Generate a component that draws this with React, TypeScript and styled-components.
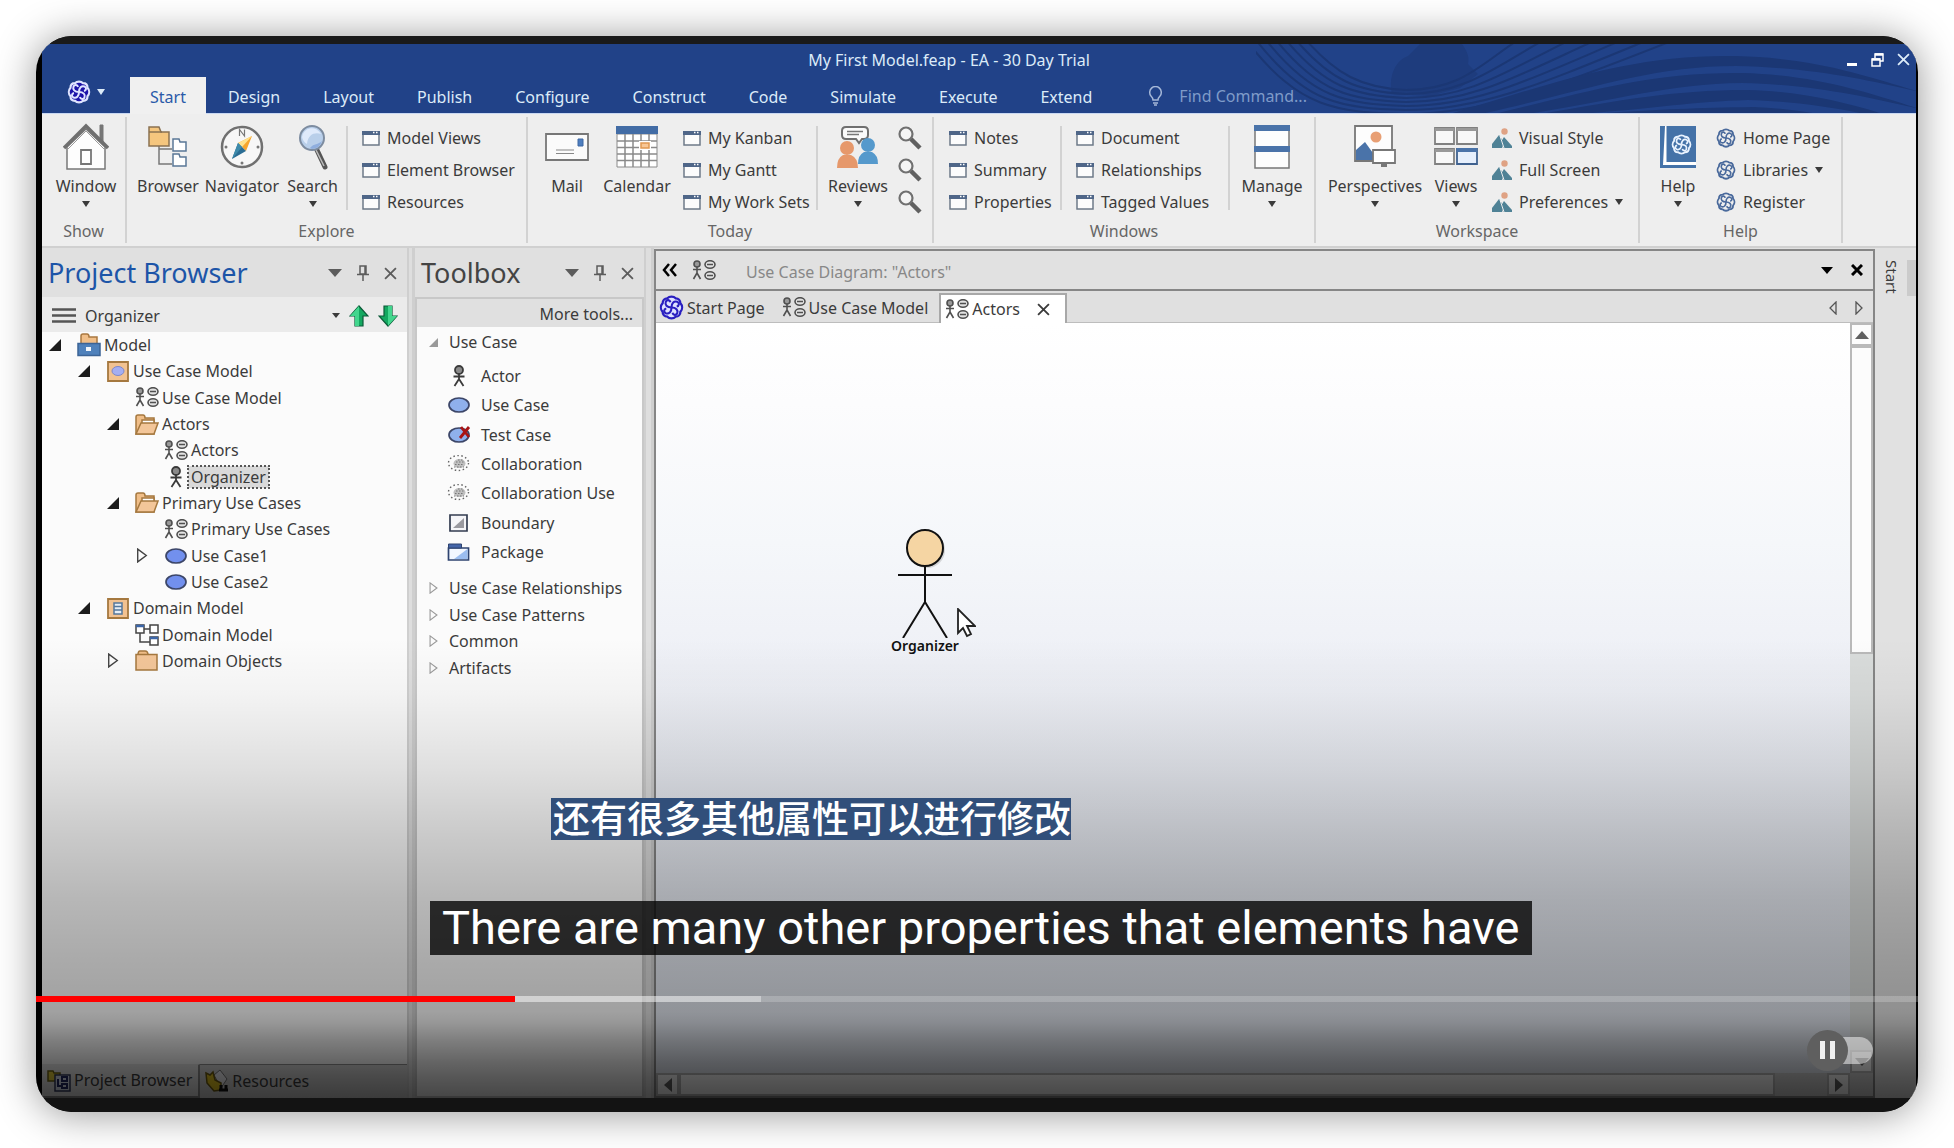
import React from "react";
import styled, { createGlobalStyle, css } from "styled-components";

const uiFont = '"Noto Sans", "Open Sans", "DejaVu Sans", sans-serif';

const GlobalStyle = createGlobalStyle`
  *, *::before, *::after { box-sizing: border-box; }
  body { margin: 0; background: #fff; font-family: ${uiFont}; font-size: 16px; color: #3b3b3b; }
  button, input, select { font: inherit; color: inherit; background: none; border: 0; padding: 0; margin: 0; }
  ul { list-style: none; margin: 0; padding: 0; }
  svg { display: block; flex: none; }
`;

/* ---------- frame ---------- */

const Page = styled.div`
  height: 100vh;
  padding: 36px;
  display: flex;
  overflow: hidden;
`;
const Frame = styled.main`
  position: relative;
  flex: 1;
  min-width: 0;
  display: flex;
  flex-direction: column;
  background: #000;
  border-radius: 36px;
  overflow: hidden;
`;
const Shadow = styled.div`
  flex: 1;
  display: flex;
  min-width: 0;
  border-radius: 36px;
  box-shadow: 0 2px 40px rgba(0, 0, 0, 0.42);
`;
const TopEdge = styled.div`height: 8px; flex: none; background: #1a1a1a;`;
const BottomEdge = styled.div`height: 14px; flex: none; background: #131313;`;
const Screen = styled.div`
  flex: 1;
  min-height: 0;
  margin: 0 2px 0 6px;
  display: flex;
  flex-direction: column;
  background: #e0e0e0;
`;

/* ---------- title bar ---------- */

const TitleBar = styled.header`
  position: relative;
  flex: none;
  background: #214288;
  color: #dcebf8;
  border-bottom: 1px solid #c9d8f2;
`;
const Waves = styled.svg`
  position: absolute;
  right: 0;
  top: 0;
  width: 660px;
  height: 69px;
`;
const TitleRow = styled.div`
  position: relative;
  display: grid;
  grid-template-columns: 1fr auto 1fr;
  align-items: center;
  height: 33px;
  padding: 0 6px 2px 0;
`;
const TitleText = styled.h1`
  grid-column: 2;
  margin: 0 54px 0 0;
  font-size: 16px;
  line-height: 22px;
  font-weight: 400;
`;
const WindowButtons = styled.div`
  justify-self: end;
  display: flex;
  gap: 13px;
`;
const PlainButton = styled.button`
  display: flex;
  align-items: center;
  justify-content: center;
`;
const TabRow = styled.nav`
  position: relative;
  display: flex;
  align-items: stretch;
  height: 37px;
  margin-bottom: -1px;
`;
const AppButton = styled(PlainButton)`
  width: 88px;
  padding-bottom: 8px;
  gap: 6px;
`;
const RibbonTab = styled.button<{ $active?: boolean }>`
  padding: 2px 21px 0;
  margin-right: 1px;
  line-height: 22px;
  ${(p) => p.$active && css`background: #f0f0f0; color: #2a5aa8; padding: 2px 20px 0;`}
`;
const FindBox = styled.label`
  display: flex;
  align-items: center;
  gap: 16px;
  margin-left: 34px;
`;
const FindInput = styled.input`
  width: 160px;
  outline: none;
  &::placeholder { color: #7f9bc9; opacity: 1; }
`;

/* ---------- ribbon ---------- */

const Ribbon = styled.div`
  flex: none;
  display: flex;
  height: 134px;
  padding: 3px 0;
  background: #eeeeee;
  border-bottom: 2px solid #d0d0d0;
`;
const Group = styled.section<{ $w: number }>`
  width: ${(p) => p.$w}px;
  display: flex;
  flex-direction: column;
  border-right: 2px solid #d2d2d2;
`;
const GroupBody = styled.div<{ $pad?: number }>`
  display: flex;
  height: 103px;
  padding: 0 0 0 ${(p) => p.$pad ?? 0}px;
`;
const GroupName = styled.h2`
  margin: 0;
  font-size: 16px;
  line-height: 22px;
  font-weight: 400;
  color: #666;
  text-align: center;
`;
const Big = styled.button<{ $w: number }>`
  width: ${(p) => p.$w}px;
  flex: none;
  display: flex;
  flex-direction: column;
  align-items: center;
  padding-top: 6px;
  line-height: 22px;
  white-space: nowrap;
`;
const BigIcon = styled.span`
  display: flex;
  align-items: center;
  height: 48px;
  margin-bottom: 4px;
`;
const BigMenu = styled.span`padding-top: 4px;`;
const SmallColumn = styled.div<{ $w?: number; $pad: number }>`
  ${(p) => (p.$w ? `width: ${p.$w}px;` : "flex: 1;")}
  padding: 5px 0 0 ${(p) => p.$pad}px;
`;
const Small = styled.button`
  display: flex;
  align-items: center;
  gap: 7px;
  height: 32px;
  line-height: 22px;
  white-space: nowrap;
`;
const InnerRule = styled.div`
  width: 2px;
  height: 84px;
  margin-top: 9px;
  background: #d2d2d2;
`;

/* ---------- workspace ---------- */

const Workspace = styled.div`
  flex: 1;
  min-height: 0;
  display: flex;
`;
const Splitter = styled.div<{ $w: number }>`
  width: ${(p) => p.$w}px;
  flex: none;
  background: #dedede;
  border: solid #cfcfcf;
  border-width: 0 3px 0 2px;
`;
const Panel = styled.section<{ $w: number }>`
  width: ${(p) => p.$w}px;
  flex: none;
  display: flex;
  flex-direction: column;
`;
const PanelHead = styled.div`
  display: flex;
  align-items: center;
  gap: 15px;
  height: 49px;
  padding: 1px 10px 0 6px;
  color: #5c5c5c;
`;
const PanelTitle = styled.h2<{ $blue?: boolean }>`
  flex: 1;
  margin: 0;
  font-size: 27px;
  line-height: 36px;
  font-weight: 400;
  white-space: nowrap;
  color: ${(p) => (p.$blue ? "#1d55a8" : "#444")};
`;
const ContextBar = styled.div`
  display: flex;
  align-items: center;
  height: 35px;
  padding: 2px 9px 0 10px;
  gap: 9px;
  background: #ebebeb;
`;
const ContextSelect = styled.select`
  flex: 1;
  appearance: none;
  line-height: 22px;
`;
const TreeArea = styled.div`
  flex: 1;
  background: #fbfbfb;
`;
const Tree = styled.ul`
  display: grid;
  grid-template-rows: repeat(13, 1fr);
  height: 342px;
`;
const TreeRow = styled.li<{ $level: number }>`
  display: flex;
  align-items: center;
  padding-left: ${(p) => 7 + p.$level * 29}px;
  line-height: 22px;
`;
const Toggle = styled(PlainButton)`
  width: 28px;
  justify-content: flex-start;
`;
const Glyph = styled.span<{ $w: number }>`
  width: ${(p) => p.$w}px;
  flex: none;
  display: flex;
  justify-content: center;
`;
const TreeLabel = styled.button<{ $selected?: boolean }>`
  padding: 0 3px;
  ${(p) => p.$selected && css`background: #d9d9d9; outline: 2px dotted #555; outline-offset: -1px;`}
`;
const DockTabs = styled.div`
  flex: none;
  display: flex;
  height: 34px;
  background: #d4d4d4;
`;
const DockTab = styled.button<{ $active?: boolean }>`
  display: flex;
  align-items: center;
  gap: 3px;
  padding: 0 6px 2px 5px;
  border-top: 1px solid ${(p) => (p.$active ? "transparent" : "#8f8f8f")};
  ${(p) => p.$active && css`background: #e6e6e6; border-right: 2px solid #8f8f8f; border-bottom: 2px solid #8f8f8f;`}
`;
const DockRest = styled.div`flex: 1; border-top: 1px solid #8f8f8f;`;

const ToolList = styled.div`
  flex: 1;
  background: #fbfbfb;
  border: 2px solid #c8c8c8;
  overflow: hidden;
`;
const MoreTools = styled.button`
  display: block;
  width: 100%;
  height: 28px;
  padding: 2px 9px 0;
  text-align: right;
  background: #e0e0e0;
`;
const Category = styled.button`
  display: flex;
  align-items: center;
  gap: 11px;
  height: 100%;
  padding-left: 12px;
  white-space: nowrap;
`;
const FirstCategory = styled.div`height: 30px;`;
const Tools = styled.ul`
  display: grid;
  grid-template-rows: repeat(7, 1fr);
  height: 206px;
  margin: 4px 0 8px;
`;
const Categories = styled.ul`
  display: grid;
  grid-template-rows: repeat(4, 1fr);
  height: 106px;
`;
const Tool = styled.button`
  display: flex;
  align-items: center;
  gap: 10px;
  height: 100%;
  padding-left: 30px;
`;

/* ---------- document ---------- */

const Document = styled.section`
  flex: 1;
  min-width: 0;
  margin-top: 1px;
  display: flex;
  flex-direction: column;
  border: 2px solid #868686;
`;
const DocHead = styled.div`
  flex: none;
  display: flex;
  align-items: center;
  height: 40px;
  padding: 0 10px 0 6px;
  border-bottom: 2px solid #868686;
  background: #e1e1e1;
  color: #000;
`;
const DocTitle = styled.h2`
  flex: 1;
  margin: 0;
  padding: 4px 0 0 16px;
  font-size: 16px;
  font-weight: 400;
  line-height: 22px;
  color: #888;
`;
const DocTabs = styled.div`
  flex: none;
  display: flex;
  align-items: stretch;
  height: 32px;
  padding: 2px 10px 0 3px;
  background: linear-gradient(#e0e0e0 31px, #bdbdbd 31px);
`;
const DocTab = styled.button<{ $active?: boolean }>`
  display: flex;
  align-items: center;
  gap: 3px;
  margin-right: 17px;
  padding-bottom: 1px;
  ${(p) => p.$active && css`background: #fff; border: solid #a8a8a8; border-width: 2px 2px 0; padding: 0 0 0 4px; margin: 0 0 0 -6px;`}
`;
const DocRest = styled.div`
  flex: 1;
  display: flex;
  justify-content: flex-end;
  gap: 18px;
`;
const CanvasGrid = styled.div`
  flex: 1;
  min-height: 0;
  display: grid;
  grid-template-columns: 1fr 23px;
  grid-template-rows: 1fr 23px;
`;
const Canvas = styled.div`
  position: relative;
  background: linear-gradient(#ffffff 0, #fcfcfd 80px, #f5f7fa 220px, #eef0f6 340px, #e5e9f1 620px, #e0e5ee 100%);
`;
const ActorNode = styled.figure`
  position: absolute;
  left: 231px;
  top: 205px;
  width: 76px;
  margin: 0;
  display: flex;
  flex-direction: column;
  align-items: center;
  color: #111;
  font-size: 14px;
  font-weight: 600;
  line-height: 16px;
`;
const Cursor = styled.svg`
  position: absolute;
  left: 300px;
  top: 285px;
`;
const VScroll = styled.div`
  display: flex;
  flex-direction: column;
  background: #d9dcdb;
`;
const HScroll = styled.div`
  display: flex;
  background: #d0d0d0;
`;
const ScrollButton = styled(PlainButton)`
  width: 23px;
  height: 23px;
  flex: none;
  background: #fcfcfc;
  border: 2px solid #b9b9b9;
  color: #606060;
`;
const Thumb = styled.div<{ $grow: number }>`
  flex: ${(p) => p.$grow};
  background: #fcfcfc;
  border: 2px solid #b9b9b9;
`;
const Spacer = styled.div<{ $grow: number }>`flex: ${(p) => p.$grow};`;
const Corner = styled.div`background: #d0d0d0;`;
const SideStrip = styled.aside`
  width: 41px;
  flex: none;
  display: flex;
  justify-content: space-between;
  align-items: flex-start;
  padding-top: 12px;
  background: #e1e1e1;
`;
const SideTab = styled.button`
  writing-mode: vertical-rl;
  padding-left: 6px;
  font-size: 15px;
  line-height: 22px;
`;
const SideHandle = styled.div`width: 9px; height: 36px; background: #cbcbcb;`;

/* ---------- player overlay ---------- */

const Shade = styled.div`
  position: absolute;
  left: 0;
  right: 0;
  bottom: 14px;
  height: 460px;
  pointer-events: none;
  background: linear-gradient(
    rgba(0, 0, 0, 0) 0,
    rgba(0, 0, 0, 0.03) 55px,
    rgba(0, 0, 0, 0.11) 130px,
    rgba(0, 0, 0, 0.2) 200px,
    rgba(0, 0, 0, 0.27) 260px,
    rgba(0, 0, 0, 0.32) 320px,
    rgba(0, 0, 0, 0.36) 374px,
    rgba(0, 0, 0, 0.4) 385px,
    rgba(0, 0, 0, 0.5) 403px,
    rgba(0, 0, 0, 0.6) 424px,
    rgba(0, 0, 0, 0.66) 440px,
    rgba(0, 0, 0, 0.72) 460px
  );
`;
const TranslatedCaption = styled.p`
  position: absolute;
  left: 515px;
  bottom: 272px;
  margin: 0;
  padding-left: 2px;
  font-family: "Noto Sans CJK SC", sans-serif;
  font-size: 37px;
  font-weight: 500;
  line-height: 38px;
  height: 42px;
  color: #fff;
  background: #314f7a;
`;
const Caption = styled.p`
  position: absolute;
  left: 394px;
  bottom: 157px;
  margin: 0;
  padding: 0 12px;
  font-family: Roboto, sans-serif;
  font-size: 47px;
  line-height: 54px;
  color: #fff;
  background: rgba(8, 8, 8, 0.82);
  white-space: nowrap;
`;
const Seek = styled.input<{ $played: number; $loaded: number }>`
  position: absolute;
  left: 0;
  bottom: 110px;
  width: 100%;
  height: 6px;
  appearance: none;
  background: linear-gradient(
    to right,
    #f00 ${(p) => p.$played}%,
    rgba(255, 255, 255, 0.5) ${(p) => p.$played}%,
    rgba(255, 255, 255, 0.5) ${(p) => p.$loaded}%,
    rgba(255, 255, 255, 0.2) ${(p) => p.$loaded}%
  );
  &::-webkit-slider-thumb { appearance: none; width: 0; height: 0; }
`;
const AutoPlay = styled.button`
  position: absolute;
  right: 45px;
  bottom: 41px;
  width: 66px;
  height: 42px;
  display: flex;
  align-items: center;
`;
const AutoTrack = styled.span`
  position: absolute;
  left: 8px;
  right: 0;
  top: 8px;
  height: 27px;
  border-radius: 14px;
  background: rgba(255, 255, 255, 0.5);
`;
const AutoKnob = styled.span`
  position: relative;
  width: 41px;
  height: 41px;
  border-radius: 50%;
  background: #5f5f5f;
  display: flex;
  align-items: center;
  justify-content: center;
  gap: 5px;
  &::before, &::after { content: ""; width: 5px; height: 18px; background: #f0f0f0; }
`;

/* ---------- icons ---------- */

const Caret = ({ w = 8, h = 6 }: { w?: number; h?: number }) => (
  <svg width={w} height={h} viewBox="0 0 10 6" preserveAspectRatio="none"><path d="M0 0h10L5 6z" fill="currentColor" /></svg>
);
const Cross = ({ size = 13, weight = 1.7 }: { size?: number; weight?: number }) => (
  <svg width={size} height={size} viewBox="0 0 12 12"><path d="M1 1l10 10M11 1L1 11" stroke="currentColor" strokeWidth={weight} fill="none" /></svg>
);
const Pin = () => (
  <svg width="12" height="16" viewBox="0 0 12 16"><path d="M3 1h6v8H3zM0 9.500h12M6 9v7M8 1v8" stroke="currentColor" strokeWidth="1.500" fill="none" /></svg>
);
const Knot = ({ size, line, fill = "none" }: { size: number; line: string; fill?: string }) => (
  <svg width={size} height={size} viewBox="0 0 24 24">
    <path d="M8 3.200c2-2.200 6-2.200 8 0 2.800 0 4.500 2 4.500 4.600 2.200 2.400 2.200 6 0 8.400 0 2.600-1.700 4.600-4.500 4.600-2 2.200-6 2.200-8 0-2.800 0-4.500-2-4.500-4.600-2.200-2.400-2.200-6 0-8.400 0-2.600 1.700-4.600 4.500-4.600z" fill={fill} stroke={line} strokeWidth="2.200" />
    {[0, 90, 180, 270].map((a) => (
      <path key={a} transform={`rotate(${a} 12 12)`} d="M12 12c0-4.500 2.500-6.500 5.500-5.500 2.300 1 2 4-.5 4.500" fill="none" stroke={line} strokeWidth="2" />
    ))}
  </svg>
);
const HouseIcon = () => (
  <svg width="46" height="48" viewBox="0 0 46 48">
    <path d="M4 24v22h38V24L23 6z" fill="#fdfdfd" stroke="#777" strokeWidth="1.500" />
    <path d="M37 2h3v20l-3-3z" fill="#777" stroke="#777" />
    <path d="M1 25L23 3l22 22" fill="none" stroke="#6f6f6f" strokeWidth="3.500" />
    <path d="M3 28L23 8l20 20" fill="none" stroke="#999" strokeWidth="1" />
    <path d="M18 27h10v14H18z" fill="#fff" stroke="#777" strokeWidth="1.800" />
  </svg>
);
const FoldersIcon = () => (
  <svg width="40" height="42" viewBox="0 0 40 42">
    <path d="M11 19v19h13M11 23h13" fill="none" stroke="#777" strokeWidth="1.500" />
    <path d="M1 6V1h10l2 5h8v14H1z" fill="#f5c67e" stroke="#8a7252" strokeWidth="1.500" />
    <path d="M1 6h13" stroke="#8a7252" strokeWidth="1.500" />
    <path d="M25 16v-3h6l1 3h6v9H25zM25 31v-3h6l1 3h6v9H25z" fill="#fff" stroke="#5a7797" strokeWidth="1.500" />
  </svg>
);
const CompassIcon = () => (
  <svg width="44" height="44" viewBox="0 0 44 44">
    <circle cx="22" cy="22" r="20" fill="#f7f7f7" stroke="#707070" strokeWidth="2.500" />
    <path d="M19.500 11V4.500l5 6.500V4.500" fill="none" stroke="#777" strokeWidth="1.200" />
    <circle cx="22" cy="38" r="1.500" fill="#777" /><circle cx="6" cy="22" r="1.500" fill="#777" /><circle cx="38" cy="22" r="1.500" fill="#777" />
    <path d="M32 11l-6 15-8-8z" fill="#f6a52c" /><path d="M32 11L22 22l-4-4z" fill="#ffe28c" />
    <path d="M12 34l6-16 8 8z" fill="#2b6d93" /><path d="M12 34l10-12-4-4z" fill="#3e8bab" />
  </svg>
);
const SearchIcon = () => (
  <svg width="30" height="46" viewBox="0 0 30 46">
    <path d="M18 24l9 19" stroke="#555" strokeWidth="5" strokeLinecap="round" /><path d="M18 26l8 16" stroke="#bbb" strokeWidth="1.500" />
    <circle cx="14" cy="14" r="12" fill="#b9cfea" stroke="#7d8ca0" strokeWidth="2" />
    <path d="M4 13a10 10 0 0 1 19-3c-6-2-13 0-14 10a10 10 0 0 1-5-7z" fill="#dfeafb" />
    <path d="M14 25a11 11 0 0 0 10-8c-4 4-8 2-12 7z" fill="#8faede" />
  </svg>
);
const WindowIcon = () => (
  <svg width="18" height="15" viewBox="0 0 18 15">
    <path d="M1 1h16v13H1z" fill="#fcfcfc" stroke="#6e7a88" strokeWidth="1.500" /><path d="M0 0h18v4H0z" fill="#4f6688" /><path d="M11 1.500h1.500M14 1.500h1.500" stroke="#fff" strokeWidth="1.500" />
  </svg>
);
const MailIcon = () => (
  <svg width="44" height="28" viewBox="0 0 44 28">
    <path d="M1 1h42v26H1z" fill="#fbfbfb" stroke="#777" strokeWidth="1.800" /><path d="M33 6h5v7h-5z" fill="#4f7fc0" stroke="#3f69a3" /><path d="M11 17h18M11 20.500h18" stroke="#888" strokeWidth="1.200" />
  </svg>
);
const CalendarIcon = () => (
  <svg width="42" height="42" viewBox="0 0 42 42">
    <path d="M1 8h40v33H1z" fill="#fff" stroke="#8a8a8a" /><path d="M9 8v33M17 8v33M25 8v33M33 8v33M1 15h40M1 21.500h40M1 28h40M1 34.500h40" stroke="#8a8a8a" strokeWidth="1.500" />
    <path d="M0 0h42v8H0z" fill="#426ca5" /><path d="M23 15h12v9H23z" fill="#fff" /><path d="M25 17h8v5h-8z" fill="#f8c795" stroke="#e09850" strokeWidth="1.500" />
  </svg>
);
const ReviewsIcon = () => (
  <svg width="42" height="44" viewBox="0 0 42 44">
    <path d="M9 2h18q4 0 4 4v4q0 4-4 4h-2l-3 4-3-4H9q-4 0-4-4V6q0-4 4-4z" fill="#fafafa" stroke="#6f6f6f" strokeWidth="2" /><path d="M10 6.500h16M10 9.500h12" stroke="#777" strokeWidth="1.300" />
    <circle cx="31" cy="20" r="7" fill="#5599cc" /><path d="M21 39q0-9 6-12h8q6 3 6 12z" fill="#5599cc" />
    <circle cx="10" cy="23" r="7" fill="#e6986b" /><path d="M0 43q0-10 6-13h8q7 3 7 13z" fill="#e6986b" />
  </svg>
);
const LensIcon = () => (
  <svg width="24" height="24" viewBox="0 0 24 24"><circle cx="8" cy="8" r="6.500" fill="#f4f4f4" stroke="#707070" strokeWidth="2.200" /><path d="M13 13l9 9" stroke="#606060" strokeWidth="4.500" /></svg>
);
const ManageIcon = () => (
  <svg width="36" height="44" viewBox="0 0 36 44"><path d="M1 1h34v42H1z" fill="#fdfdfd" stroke="#777" strokeWidth="1.500" /><path d="M0 0h36v6H0zM0 21h36v6H0z" fill="#4a73a9" /></svg>
);
const PerspectivesIcon = () => (
  <svg width="42" height="44" viewBox="0 0 42 44">
    <path d="M1 1h37v35H1z" fill="#fdfdfd" stroke="#777" strokeWidth="1.800" /><circle cx="22" cy="12" r="5.500" fill="#e89f74" />
    <path d="M2 35V25l9-8 13 18z" fill="#4a73a9" /><path d="M19 25h22v13H19z" fill="#fff" stroke="#777" strokeWidth="1.800" /><path d="M27 38h6v4h-6z" fill="#777" />
  </svg>
);
const ViewsIcon = () => (
  <svg width="44" height="40" viewBox="0 0 44 40">
    <path d="M1 1h19v16H1zM23 1h20v16H23zM1 22h19v15H1z" fill="#f8f8f8" stroke="#808080" strokeWidth="1.800" /><path d="M1 1h19v3H1zM23 1h20v3H23zM1 22h19v3H1z" fill="#999" />
    <path d="M23 22h20v15H23z" fill="#e6effc" stroke="#3f618f" strokeWidth="1.800" /><path d="M23 21h20v4H23z" fill="#4a73a9" />
  </svg>
);
const StyleIcon = () => (
  <svg width="20" height="20" viewBox="0 0 20 20"><circle cx="12.500" cy="3.500" r="3.200" fill="#dfa284" /><path d="M0 20v-4l7-9 4 6-1 7z" fill="#4f8296" /><path d="M11 20l-2-6 3-5 8 9v2z" fill="#4f8296" /><path d="M8 8l4 12" stroke="#eee" strokeWidth="1" /></svg>
);
const BookIcon = () => (
  <svg width="36" height="42" viewBox="0 0 36 42">
    <path d="M0 0h36v42H0z" fill="#4472a8" /><path d="M5 0h1.500v36H36v3H3z" fill="#fff" />
    <g transform="translate(11 8)"><Knot size={21} line="#e8f2ff" /></g>
  </svg>
);
const DiagramIcon = () => (
  <svg width="24" height="21" viewBox="0 0 24 21" fill="none" stroke="#505050" strokeWidth="1.600">
    <circle cx="5" cy="4" r="3" fill="#999" /><path d="M5 7v7M1 9.500h8M5 13l-3.500 6M5 13l3.500 6" />
    <ellipse cx="18" cy="4.500" rx="5" ry="3.800" fill="#e2e2e2" /><ellipse cx="18" cy="15.500" rx="5" ry="3.800" fill="#e2e2e2" /><path d="M15 4.500h6M15 15.500h6" />
  </svg>
);
const ActorIcon = ({ tall = 22 }: { tall?: number }) => (
  <svg width="14" height={tall} viewBox="0 0 14 22" fill="none" stroke="#3a3a3a" strokeWidth="1.800">
    <circle cx="7" cy="5" r="4" fill="#8a8a8a" /><path d="M7 9v6M1.500 11.500h11M7 14l-4.500 7M7 14l4.500 7" />
  </svg>
);
const OvalIcon = ({ fill = "#7290ee", crossed }: { fill?: string; crossed?: boolean }) => (
  <svg width="24" height="18" viewBox="0 0 24 18">
    <ellipse cx="12" cy="9" rx="10" ry="7" fill={fill} stroke="#3c4668" strokeWidth="1.700" />
    {crossed && <path d="M13 12l9-11M14 1l8 10" stroke="#a81414" strokeWidth="2.800" fill="none" />}
  </svg>
);
const CloudIcon = () => (
  <svg width="24" height="18" viewBox="0 0 24 18"><ellipse cx="11.500" cy="8" rx="10" ry="7.500" fill="none" stroke="#666" strokeWidth="1.400" strokeDasharray="1.500 2.500" /><ellipse cx="12.500" cy="8.500" rx="6" ry="4.500" fill="#c0c0c0" /><path d="M7 12h10M8 9.500h9M9 7h8M11 5h6" stroke="#777" strokeDasharray="1.500 1.500" /></svg>
);
const BoundaryIcon = () => (
  <svg width="24" height="18" viewBox="0 0 24 18"><path d="M3 1h17v16H3z" fill="#f5f5f8" stroke="#333c50" strokeWidth="1.700" /><path d="M17 4v10H6z" fill="#9a9aa0" /></svg>
);
const PackageIcon = () => (
  <svg width="24" height="18" viewBox="0 0 24 18"><path d="M1.500 5h20v12h-20z" fill="#f2f7ff" stroke="#2f4470" strokeWidth="1.700" /><path d="M7 16L20.500 6v10z" fill="#9bbdf0" /><path d="M1.500 1h13v4h-13z" fill="#4465a8" stroke="#2f4470" /></svg>
);
const RootIcon = () => (
  <svg width="24" height="24" viewBox="0 0 24 24"><path d="M4 12V3q0-2 2-2h4q2 0 2 3h8v9H4z" fill="#f0be88" stroke="#a97840" strokeWidth="1.500" /><path d="M1 10.500h22v12H1z" fill="#4f81bb" stroke="#3c6496" strokeWidth="1.500" /><path d="M9 14h5v4H9z" fill="#f2f6fb" /></svg>
);
const ModelIcon = ({ domain }: { domain?: boolean }) => (
  <svg width="22" height="21" viewBox="0 0 22 21"><path d="M1 1h20v19H1z" fill="#f2c291" stroke="#a5783f" strokeWidth="1.800" />
    {domain ? <path d="M7 5h8v11H7zM7 8.500h8M7 12h8" fill="#e6eef6" stroke="#55789c" strokeWidth="1.500" /> : <ellipse cx="11" cy="10" rx="6" ry="4.500" fill="#a5aef2" stroke="#7f88c8" />}
  </svg>
);
const FolderIcon = ({ open }: { open?: boolean }) => (
  <svg width="24" height="21" viewBox="0 0 24 21" stroke="#a5783f" strokeWidth="1.500">
    {open ? (<><path d="M1 20V3q0-2 2-2h5q2 0 2 3h9v16z" fill="#f0be88" /><path d="M7 6h12v6H7z" fill="#fff" /><path d="M1 20l5-11h17l-4 11z" fill="#f3c699" /></>)
      : (<><path d="M3 5q0-4 2-4h5q3 0 3 4" fill="#f0be88" /><path d="M1 4.500h21V20H1z" fill="#f3c699" /></>)}
  </svg>
);
const ClassIcon = () => (
  <svg width="24" height="22" viewBox="0 0 24 22" fill="#fff" stroke="#444" strokeWidth="1.500"><path d="M5 9v9h10M9 5h6" fill="none" /><path d="M1 1h8v8H1zM15 1h8v8h-8zM15 13h8v8h-8z" /><path d="M1 2h8M15 14h8" stroke="#3c66a8" strokeWidth="2.500" /></svg>
);
const Expander = ({ open, light }: { open?: boolean; light?: boolean }) =>
  open ? (
    <svg width={light ? 9 : 12} height={light ? 9 : 12} viewBox="0 0 12 12"><path d="M12 0v12H0z" fill={light ? "#999" : "#1c1c1c"} /></svg>
  ) : (
    <svg width={light ? 9 : 12} height={light ? 12 : 15} viewBox="0 0 10 14"><path d="M1 1l8 6-8 6z" fill="none" stroke={light ? "#999" : "#444"} strokeWidth="1.300" /></svg>
  );
const NavArrow = ({ up }: { up?: boolean }) => (
  <svg width="20" height="22" viewBox="0 0 20 22"><g transform={up ? undefined : "rotate(180 10 11)"}><path d="M10 1l9 10h-5v10H6V11H1z" fill="#14a860" stroke="#0b5a38" strokeWidth="1.200" /><path d="M10 1v20H6V11H1z" fill="#42d68d" /></g></svg>
);
const Triangle = ({ dir }: { dir: "up" | "down" | "left" | "right" }) => {
  const turn = { up: 0, right: 90, down: 180, left: 270 }[dir];
  return <svg width="16" height="16" viewBox="0 0 16 16"><path transform={`rotate(${turn} 8 8)`} d="M8 4l7 8H1z" fill="currentColor" /></svg>;
};
const HollowArrow = ({ left }: { left?: boolean }) => (
  <svg width="8" height="14" viewBox="0 0 8 14"><path d={left ? "M7 1v12L1 7z" : "M1 1v12l6-6z"} fill="none" stroke="#555" strokeWidth="1.300" /></svg>
);

/* ---------- parts ---------- */

const BigButton = ({ w, icon, label, menu }: { w: number; icon: React.ReactNode; label: string; menu?: boolean }) => (
  <Big $w={w}><BigIcon>{icon}</BigIcon>{label}{menu && <BigMenu><Caret w={8} h={6} /></BigMenu>}</Big>
);
const SmallButtons = ({ w, pad, icon, labels, menus = [] }: { w?: number; pad: number; icon: React.ReactNode; labels: string[]; menus?: string[] }) => (
  <SmallColumn $w={w} $pad={pad}>
    {labels.map((l) => <Small key={l}>{icon}{l}{menus.includes(l) && <Caret w={8} h={6} />}</Small>)}
  </SmallColumn>
);

type Node = { level: number; label: string; icon: React.ReactNode; open?: boolean; closed?: boolean; selected?: boolean };
const nodes: Node[] = [
  { level: 0, label: "Model", icon: <RootIcon />, open: true },
  { level: 1, label: "Use Case Model", icon: <ModelIcon />, open: true },
  { level: 2, label: "Use Case Model", icon: <DiagramIcon /> },
  { level: 2, label: "Actors", icon: <FolderIcon open />, open: true },
  { level: 3, label: "Actors", icon: <DiagramIcon /> },
  { level: 3, label: "Organizer", icon: <ActorIcon />, selected: true },
  { level: 2, label: "Primary Use Cases", icon: <FolderIcon open />, open: true },
  { level: 3, label: "Primary Use Cases", icon: <DiagramIcon /> },
  { level: 3, label: "Use Case1", icon: <OvalIcon />, closed: true },
  { level: 3, label: "Use Case2", icon: <OvalIcon /> },
  { level: 1, label: "Domain Model", icon: <ModelIcon domain />, open: true },
  { level: 2, label: "Domain Model", icon: <ClassIcon /> },
  { level: 2, label: "Domain Objects", icon: <FolderIcon />, closed: true },
];
const tools: [string, React.ReactNode][] = [
  ["Actor", <ActorIcon tall={22} />],
  ["Use Case", <OvalIcon fill="#8fb0ec" />],
  ["Test Case", <OvalIcon fill="#8fb0ec" crossed />],
  ["Collaboration", <CloudIcon />],
  ["Collaboration Use", <CloudIcon />],
  ["Boundary", <BoundaryIcon />],
  ["Package", <PackageIcon />],
];
const categories = ["Use Case Relationships", "Use Case Patterns", "Common", "Artifacts"];
const tabs = ["Start", "Design", "Layout", "Publish", "Configure", "Construct", "Code", "Simulate", "Execute", "Extend"];

const PanelTools = () => (
  <>
    <PlainButton aria-label="Panel menu"><Caret w={14} h={8} /></PlainButton>
    <PlainButton aria-label="Pin panel"><Pin /></PlainButton>
    <PlainButton aria-label="Close panel"><Cross /></PlainButton>
  </>
);

const TitleWaves = () => (
  <Waves viewBox="0 0 660 69" preserveAspectRatio="none" fill="none" stroke="#1b3774">
    <path d="M136 50c-4-18 4-34 16-38l12-12h42c4 6 8 12 6 20l10 10-18 14-30 8z" fill="#1e3c7d" stroke="none" />
    {[0, 1, 2, 3, 4, 5, 6].map((i) => (
      <path key={i} d={`M${50 - i * 10} -4C${80 - i * 6} ${30 + i * 6} ${105 - i * 4} ${44 + i * 4} ${150} ${46 + i * 4}C${205 + i * 4} ${46 + i * 4} ${225 + i * 12} ${20 + i * 4} ${262 + i * 26} -4`} strokeWidth="2" />
    ))}
    {[0, 1, 2, 3].map((i) => (
      <path key={`r${i}`} d={`M${190 + i * 44} 71C${290 + i * 34} ${42 + i * 8} ${370 + i * 20} ${10 + i * 18} ${480 + i * 6} ${12 + i * 17}C560 ${14 + i * 17} 610 ${32 + i * 16} 664 ${48 + i * 17}C610 ${36 + i * 17} 560 ${24 + i * 17} ${480 + i * 6} ${22 + i * 17}C${390 + i * 20} ${22 + i * 18} ${320 + i * 34} ${50 + i * 8} ${220 + i * 44} 71z`} fill="#1b3774" stroke="none" />
    ))}
  </Waves>
);

export default function App() {
  return (
    <Page>
      <GlobalStyle />
      <Shadow>
        <Frame>
          <TopEdge />
          <Screen>
            <TitleBar>
              <TitleWaves />
              <TitleRow>
                <TitleText>My First Model.feap - EA - 30 Day Trial</TitleText>
                <WindowButtons>
                  <PlainButton aria-label="Minimize"><svg width="12" height="14" viewBox="0 0 12 14"><path d="M1 10h10v3H1z" fill="#fff" /></svg></PlainButton>
                  <PlainButton aria-label="Restore"><svg width="13" height="14" viewBox="0 0 13 14"><path d="M4 5V1h8v7H9M1 6h8v7H1z" fill="none" stroke="#fff" strokeWidth="1.500" /><path d="M4 1.500h8M1 6.500h8" stroke="#fff" strokeWidth="2.500" /></svg></PlainButton>
                  <PlainButton aria-label="Close"><Cross /></PlainButton>
                </WindowButtons>
              </TitleRow>
              <TabRow>
                <AppButton aria-label="Application menu"><Knot size={24} line="#dfe4ff" fill="#1c12a8" /><Caret w={8} h={6} /></AppButton>
                {tabs.map((t, i) => <RibbonTab key={t} $active={i === 0}>{t}</RibbonTab>)}
                <FindBox>
                  <svg width="15" height="20" viewBox="0 0 15 20"><path d="M5 14q0-2-2-4a5.800 5.800 0 1 1 9 0q-2 2-2 4zM5 17h5M6 19h3" fill="none" stroke="#a6b8d8" strokeWidth="1.500" /></svg>
                  <FindInput aria-label="Find Command" placeholder="Find Command..." />
                </FindBox>
              </TabRow>
            </TitleBar>

            <Ribbon>
              <Group $w={85}>
                <GroupBody $pad={2}><BigButton w={84} icon={<HouseIcon />} label="Window" menu /></GroupBody>
                <GroupName>Show</GroupName>
              </Group>
              <Group $w={401}>
                <GroupBody $pad={4}>
                  <BigButton w={74} icon={<FoldersIcon />} label="Browser" />
                  <BigButton w={74} icon={<CompassIcon />} label="Navigator" />
                  <BigButton w={67} icon={<SearchIcon />} label="Search" menu />
                  <InnerRule />
                  <SmallButtons pad={14} icon={<WindowIcon />} labels={["Model Views", "Element Browser", "Resources"]} />
                </GroupBody>
                <GroupName>Explore</GroupName>
              </Group>
              <Group $w={406}>
                <GroupBody $pad={6}>
                  <BigButton w={66} icon={<MailIcon />} label="Mail" />
                  <BigButton w={74} icon={<CalendarIcon />} label="Calendar" />
                  <SmallButtons pad={9} icon={<WindowIcon />} labels={["My Kanban", "My Gantt", "My Work Sets"]} />
                  <InnerRule />
                  <BigButton w={80} icon={<ReviewsIcon />} label="Reviews" menu />
                  <SmallColumn $w={34} $pad={0}>
                    {["Find", "Find next", "Find all"].map((l) => <Small key={l} aria-label={l}><LensIcon /></Small>)}
                  </SmallColumn>
                </GroupBody>
                <GroupName>Today</GroupName>
              </Group>
              <Group $w={382}>
                <GroupBody>
                  <SmallButtons w={126} pad={15} icon={<WindowIcon />} labels={["Notes", "Summary", "Properties"]} />
                  <InnerRule />
                  <SmallButtons pad={14} icon={<WindowIcon />} labels={["Document", "Relationships", "Tagged Values"]} />
                  <InnerRule />
                  <BigButton w={84} icon={<ManageIcon />} label="Manage" menu />
                </GroupBody>
                <GroupName>Windows</GroupName>
              </Group>
              <Group $w={324}>
                <GroupBody $pad={4}>
                  <BigButton w={110} icon={<PerspectivesIcon />} label="Perspectives" menu />
                  <BigButton w={52} icon={<ViewsIcon />} label="Views" menu />
                  <SmallButtons pad={10} icon={<StyleIcon />} labels={["Visual Style", "Full Screen", "Preferences"]} menus={["Preferences"]} />
                </GroupBody>
                <GroupName>Workspace</GroupName>
              </Group>
              <Group $w={203}>
                <GroupBody>
                  <BigButton w={76} icon={<BookIcon />} label="Help" menu />
                  <SmallButtons pad={0} icon={<Knot size={20} line="#4a6a9c" />} labels={["Home Page", "Libraries", "Register"]} menus={["Libraries"]} />
                </GroupBody>
                <GroupName>Help</GroupName>
              </Group>
            </Ribbon>

            <Workspace>
              <Panel $w={365}>
                <PanelHead><PanelTitle $blue>Project Browser</PanelTitle><PanelTools /></PanelHead>
                <ContextBar>
                  <svg width="24" height="15" viewBox="0 0 24 15"><path d="M0 1.500h24M0 7.500h24M0 13.500h24" stroke="#555" strokeWidth="2.500" /></svg>
                  <ContextSelect aria-label="Context"><option>Organizer</option></ContextSelect>
                  <Caret w={8} h={5} />
                  <PlainButton aria-label="Move up"><NavArrow up /></PlainButton>
                  <PlainButton aria-label="Move down"><NavArrow /></PlainButton>
                </ContextBar>
                <TreeArea>
                  <Tree>
                    {nodes.map((n, i) => (
                      <TreeRow key={i} $level={n.level}>
                        <Toggle as={n.open || n.closed ? "button" : "span"} aria-label={n.open || n.closed ? "Toggle" : undefined}>
                          {(n.open || n.closed) && <Expander open={n.open} />}
                        </Toggle>
                        <Glyph $w={24}>{n.icon}</Glyph>
                        <TreeLabel $selected={n.selected}>{n.label}</TreeLabel>
                      </TreeRow>
                    ))}
                  </Tree>
                </TreeArea>
                <DockTabs>
                  <DockTab $active>
                    <svg width="24" height="24" viewBox="0 0 24 24"><path d="M1 3h5l1 2h6v8H1z" fill="#e8d23c" stroke="#6e6417" strokeWidth="1.500" /><path d="M8 7h15v16H8z" fill="#dde4f4" stroke="#333b5c" strokeWidth="1.500" /><path d="M15 9h5v4h-5zM15 16h5v4h-5zM11 11v7h4" fill="none" stroke="#222a66" strokeWidth="2" /></svg>
                    Project Browser
                  </DockTab>
                  <DockTab>
                    <svg width="24" height="24" viewBox="0 0 24 24"><path d="M9 6l6-5 7 9-6 9z" fill="#f4f4f8" stroke="#777" /><path d="M1 4l4 2 3-3 2 8 6 3v7l-7 1-7-8z" fill="#e8c820" stroke="#6e5c10" strokeWidth="1.500" /><path d="M14 21h9M16 16v5M21 16v5" stroke="#111" strokeWidth="3" /></svg>
                    Resources
                  </DockTab>
                  <DockRest />
                </DockTabs>
              </Panel>
              <Splitter $w={8} />
              <Panel $w={229}>
                <PanelHead><PanelTitle>Toolbox</PanelTitle><PanelTools /></PanelHead>
                <ToolList>
                  <MoreTools>More tools...</MoreTools>
                  <FirstCategory><Category><Expander open light />Use Case</Category></FirstCategory>
                  <Tools>
                    {tools.map(([label, icon]) => <li key={label}><Tool><Glyph $w={24}>{icon}</Glyph>{label}</Tool></li>)}
                  </Tools>
                  <Categories>
                    {categories.map((c) => <li key={c}><Category><Expander light />{c}</Category></li>)}
                  </Categories>
                </ToolList>
              </Panel>
              <Splitter $w={10} />
              <Document>
                <DocHead>
                  <svg width="16" height="14" viewBox="0 0 16 14"><path d="M7 1L2 7l5 6M14 1L9 7l5 6" fill="none" stroke="#000" strokeWidth="2.500" /></svg>
                  <Glyph $w={52}><DiagramIcon /></Glyph>
                  <DocTitle>Use Case Diagram: "Actors"</DocTitle>
                  <DocRest>
                    <PlainButton aria-label="Document list"><Caret w={12} h={7} /></PlainButton>
                    <PlainButton aria-label="Close document"><Cross size={12} weight={3} /></PlainButton>
                  </DocRest>
                </DocHead>
                <DocTabs>
                  <DocTab><Knot size={25} line="#2a1fc0" fill="#dfe2ff" />Start Page</DocTab>
                  <DocTab><DiagramIcon />Use Case Model</DocTab>
                  <DocTab $active><DiagramIcon />Actors<Glyph $w={42}><Cross /></Glyph></DocTab>
                  <DocRest>
                    <PlainButton aria-label="Previous tab"><HollowArrow left /></PlainButton>
                    <PlainButton aria-label="Next tab"><HollowArrow /></PlainButton>
                  </DocRest>
                </DocTabs>
                <CanvasGrid>
                  <Canvas>
                    <ActorNode>
                      <svg width="60" height="110" viewBox="0 0 60 110" fill="none" stroke="#111" strokeWidth="2">
                        <circle cx="32" cy="22" r="18" fill="#999" fillOpacity="0.35" stroke="none" />
                        <circle cx="30" cy="20" r="18" fill="#f5d5a3" />
                        <path d="M30 38v36M3 47h54M30 74L8 110M30 74l22 36" />
                      </svg>
                      <figcaption>Organizer</figcaption>
                    </ActorNode>
                    <Cursor width="20" height="30" viewBox="0 0 20 30"><path d="M2 1v24l5-5 4 8 4-2-4-8h8z" fill="#fff" stroke="#222" strokeWidth="1.800" /></Cursor>
                  </Canvas>
                  <VScroll>
                    <ScrollButton aria-label="Scroll up"><Triangle dir="up" /></ScrollButton>
                    <Thumb $grow={307} />
                    <Spacer $grow={400} />
                    <ScrollButton aria-label="Scroll down"><Triangle dir="down" /></ScrollButton>
                  </VScroll>
                  <HScroll>
                    <ScrollButton aria-label="Scroll left"><Triangle dir="left" /></ScrollButton>
                    <Thumb $grow={1096} />
                    <Spacer $grow={52} />
                    <ScrollButton aria-label="Scroll right"><Triangle dir="right" /></ScrollButton>
                  </HScroll>
                  <Corner />
                </CanvasGrid>
              </Document>
              <SideStrip><SideTab>Start</SideTab><SideHandle /></SideStrip>
            </Workspace>
          </Screen>
          <BottomEdge />
          <Shade />
          <TranslatedCaption lang="zh">还有很多其他属性可以进行修改</TranslatedCaption>
          <Caption>There are many other properties that elements have</Caption>
          <Seek type="range" aria-label="Seek" min={0} max={1882} defaultValue={479} $played={25.45} $loaded={38.5} />
          <AutoPlay role="switch" aria-checked="false" aria-label="Autoplay"><AutoTrack /><AutoKnob /></AutoPlay>
        </Frame>
      </Shadow>
    </Page>
  );
}
